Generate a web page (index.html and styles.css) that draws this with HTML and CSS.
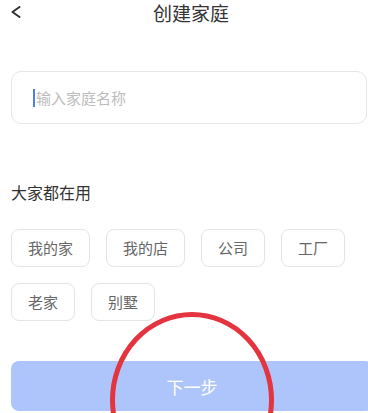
FILE: index.html
```html
<!DOCTYPE html>
<html lang="zh-CN">
<head>
<meta charset="utf-8">
<title>创建家庭</title>
<link rel="stylesheet" href="styles.css">
</head>
<body>
<div class="page">
  <header class="header">
    <svg class="back" width="10" height="12" viewBox="0 0 10 12"><path d="M8.5 1 L1.5 6 L8.5 11" fill="none" stroke="#333" stroke-width="2" stroke-linecap="round" stroke-linejoin="round"/></svg>
    <div class="title">创建家庭</div>
  </header>
  <div class="field">
    <span class="caret"></span><span class="placeholder">输入家庭名称</span>
  </div>
  <div class="section-title">大家都在用</div>
  <div class="chips">
    <div class="chip">我的家</div>
    <div class="chip">我的店</div>
    <div class="chip">公司</div>
    <div class="chip">工厂</div>
    <div class="chip">老家</div>
    <div class="chip">别墅</div>
  </div>
  <button class="next">下一步</button>
  <svg class="annotation" width="168" height="103" viewBox="0 0 168 103"><ellipse cx="84" cy="90" rx="79.5" ry="85.5" fill="none" stroke="#e3343f" stroke-width="5"/></svg>
</div>
</body>
</html>
```

FILE: styles.css
```css
html, body {
  margin: 0;
  padding: 0;
  background: #fff;
}
body {
  width: 368px;
  height: 413px;
  overflow: hidden;
  font-family: "Noto Sans CJK SC", "Noto Sans", sans-serif;
}
.page {
  position: relative;
  width: 368px;
  height: 413px;
  overflow: hidden;
}
.header {
  display: flex;
  align-items: center;
  height: 25px;
}
.back {
  margin-left: 11px;
  margin-top: -2px;
  flex: none;
}
.title {
  flex: 1;
  text-align: center;
  padding-right: 7px;
  font-size: 19px;
  line-height: 25px;
  color: #333;
}
.field {
  box-sizing: border-box;
  margin: 46px 0 0 11px;
  width: 356px;
  height: 53px;
  border: 1px solid #e6e6e6;
  border-radius: 10px;
  display: flex;
  align-items: center;
  padding-left: 21px;
}
.caret {
  width: 2px;
  height: 18px;
  background: #4d7cf4;
  margin-right: 1px;
}
.placeholder {
  font-size: 15px;
  line-height: 20px;
  color: #bcbcbc;
}
.section-title {
  margin: 57px 0 0 11px;
  font-size: 16px;
  line-height: 22px;
  color: #333;
}
.chips {
  display: flex;
  flex-wrap: wrap;
  gap: 16px;
  margin: 26px 0 0 11px;
  width: 356px;
}
.chip {
  box-sizing: border-box;
  height: 38px;
  padding: 0 16px;
  border: 1px solid #e4e4e4;
  border-radius: 8px;
  font-size: 15px;
  line-height: 36px;
  color: #666;
}
.next {
  display: block;
  box-sizing: border-box;
  margin: 40px 0 0 11px;
  width: 362px;
  height: 50px;
  border: none;
  border-radius: 8px;
  background: #adc5fb;
  color: #fff;
  font-family: inherit;
  font-size: 17px;
  padding: 0;
}
.annotation {
  position: absolute;
  left: 108px;
  top: 310px;
}
```
